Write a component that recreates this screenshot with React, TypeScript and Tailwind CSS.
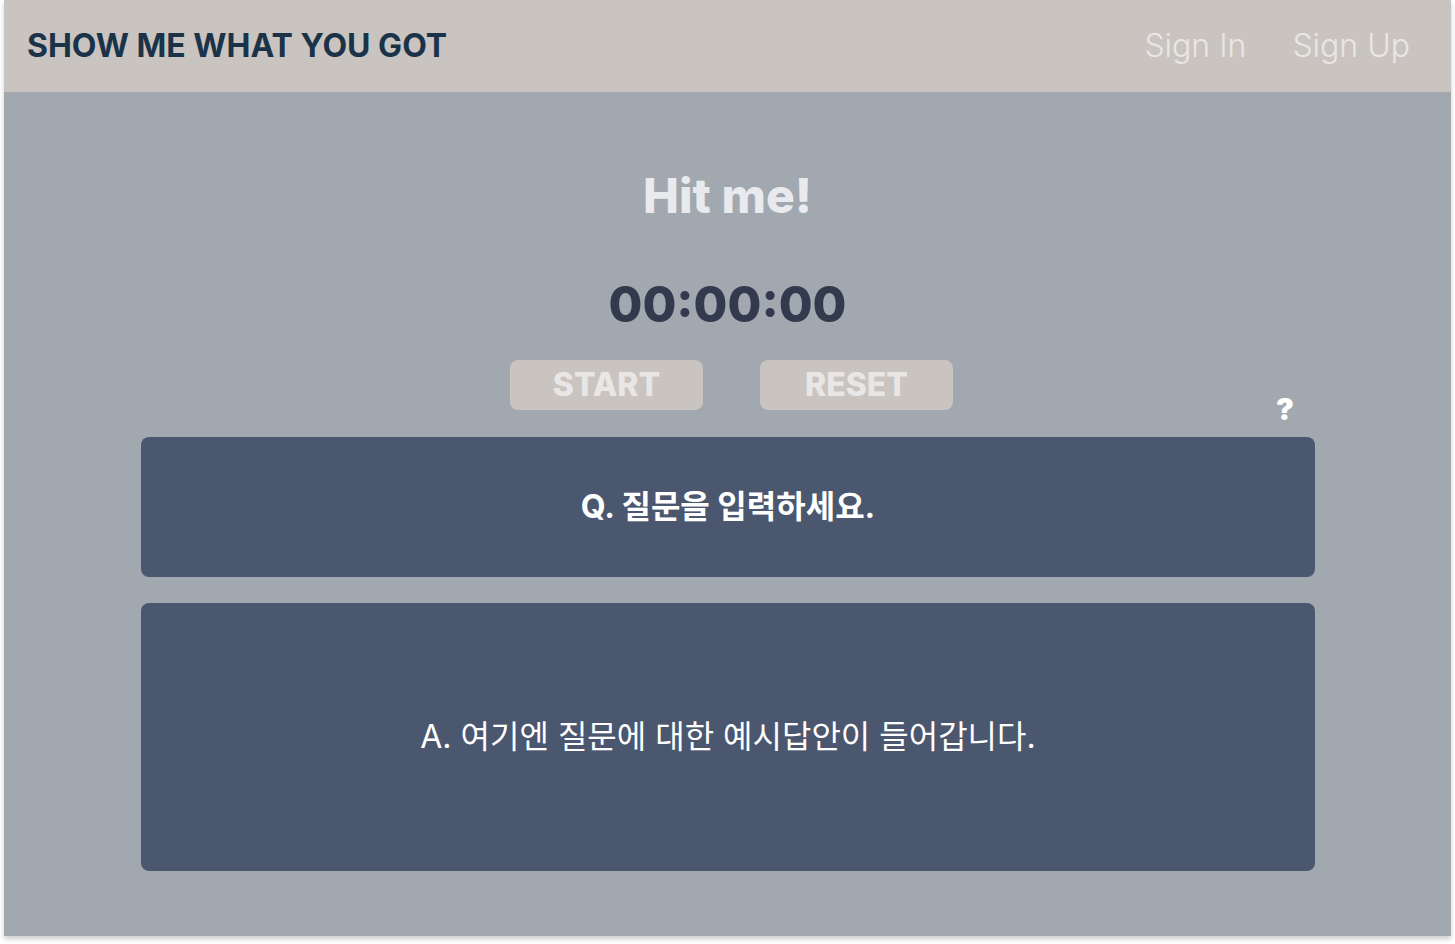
import React from "react";

const font = { fontFamily: "Inter, 'Noto Sans CJK KR', sans-serif" };

const Header = () => {
  return (
    <header className="flex items-center justify-between h-[92px] bg-[#c9c4c0] pl-[23px] pr-[41px]">
      <h1 className="text-[32px] font-bold text-[#1b3349]">SHOW ME WHAT YOU GOT</h1>
      <nav className="flex gap-[46px] text-[32px] font-light text-[#e9e7e5]">
        <a>Sign In</a>
        <a>Sign Up</a>
      </nav>
    </header>
  );
};

const Timer = () => {
  return (
    <div className="flex flex-col items-center">
      <h2 className="mt-[80px] text-[48px] font-extrabold leading-none text-[#e8eaed]">Hit me!</h2>
      <div className="mt-[60px] text-[49px] font-extrabold leading-none text-[#343a4d]">00:00:00</div>
      <div className="mt-[31px] ml-2 flex gap-[57px]">
        <button className="w-[193px] h-[50px] rounded-lg bg-[#c9c4c0] text-[32px] font-extrabold text-[#e9e7e5]">START</button>
        <button className="w-[193px] h-[50px] rounded-lg bg-[#c9c4c0] text-[32px] font-extrabold text-[#e9e7e5]">RESET</button>
      </div>
    </div>
  );
};

export default function App() {
  return (
    <div className="w-full h-[944px] bg-white px-1" style={font}>
      <div className="h-[936px] bg-[#a1a8b0] shadow-[0_3px_5px_rgba(0,0,0,0.2)] flex flex-col">
        <Header />
        <Timer />
        <div className="ml-[137px] mr-[136px] flex justify-end items-start pr-[21px] h-[27px]">
          <span className="-mt-[16px] text-[30px] font-black leading-none text-white">?</span>
        </div>
        <div className="ml-[137px] mr-[136px] flex flex-col gap-[26px]">
          <div className="h-[140px] rounded-lg bg-[#4b576e] flex items-center justify-center text-[32px] font-bold text-white">
            Q. 질문을 입력하세요.
          </div>
          <div className="h-[268px] rounded-lg bg-[#4b576e] flex items-center justify-center text-[32px] font-normal text-white">
            A. 여기엔 질문에 대한 예시답안이 들어갑니다.
          </div>
        </div>
      </div>
    </div>
  );
}
